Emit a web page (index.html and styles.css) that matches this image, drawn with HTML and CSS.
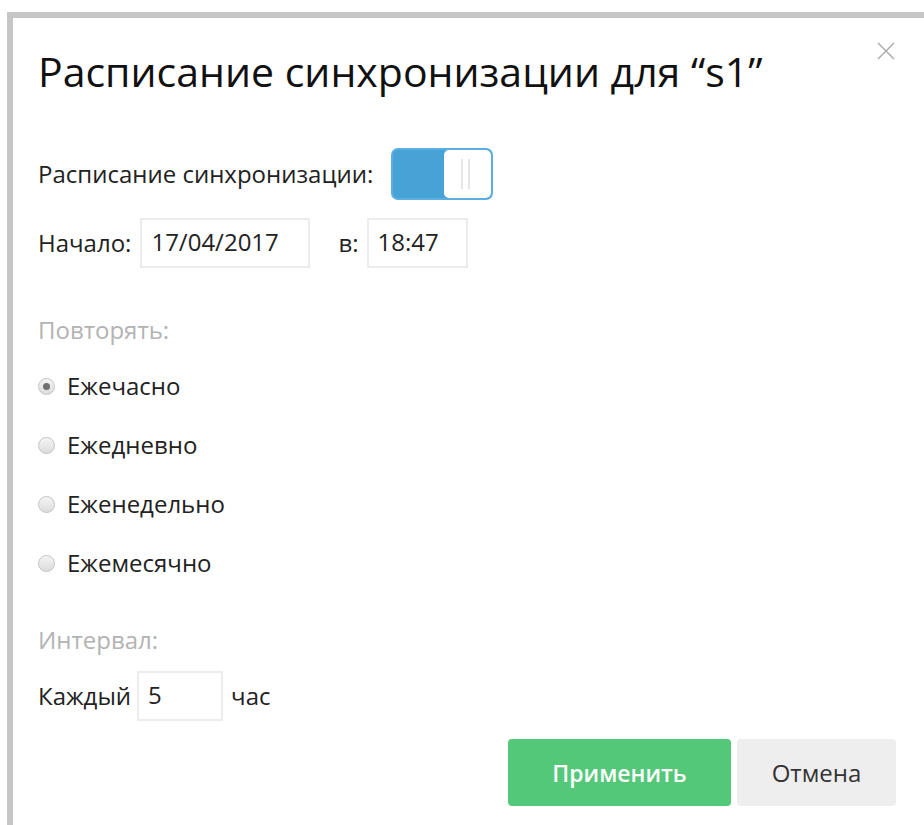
FILE: index.html
```html
<!DOCTYPE html>
<html lang="ru">
<head>
<meta charset="utf-8">
<title>Расписание синхронизации</title>
<link rel="stylesheet" href="styles.css">
</head>
<body>
<div class="frame">
  <div class="dialog">
    <button class="close" type="button" aria-label="Закрыть">
      <svg width="18" height="18" viewBox="0 0 18 18"><path d="M1 1 L17 17 M17 1 L1 17" stroke="#a8a8a8" stroke-width="1.4" fill="none"/></svg>
    </button>
    <h1 class="title">Расписание синхронизации для “s1”</h1>

    <div class="row row-switch">
      <span class="label">Расписание синхронизации:</span>
      <span class="switch">
        <span class="switch-on"></span>
        <span class="switch-handle"><i></i><i></i></span>
      </span>
    </div>

    <div class="row row-start">
      <span class="label">Начало:</span>
      <span class="field field-date">17/04/2017</span>
      <span class="label label-at">в:</span>
      <span class="field field-time">18:47</span>
    </div>

    <div class="section">Повторять:</div>

    <div class="radios">
      <label class="radio"><span class="dot checked"></span>Ежечасно</label>
      <label class="radio"><span class="dot"></span>Ежедневно</label>
      <label class="radio"><span class="dot"></span>Еженедельно</label>
      <label class="radio"><span class="dot"></span>Ежемесячно</label>
    </div>

    <div class="section section-interval">Интервал:</div>

    <div class="row row-interval">
      <span class="label">Каждый</span>
      <span class="field field-num">5</span>
      <span class="label">час</span>
    </div>

    <div class="actions">
      <button class="btn btn-apply" type="button">Применить</button>
      <button class="btn btn-cancel" type="button">Отмена</button>
    </div>
  </div>
</div>
</body>
</html>
```

FILE: styles.css
```css
html, body {
  margin: 0;
  padding: 0;
  background: #fff;
  height: 100%;
  overflow: hidden;
}

body {
  font-family: "Open Sans", "Noto Sans", sans-serif;
  color: #222;
  font-size: 24px;
}

.frame {
  margin: 12px 0 0 7px;
  border-top: 6px solid #c6c6c6;
  border-left: 6px solid #c6c6c6;
  height: 820px;
  box-sizing: border-box;
}

.dialog {
  position: relative;
  padding: 25px 0 0 25px;
  width: 871px;
  box-sizing: border-box;
}

.close {
  position: absolute;
  top: 24px;
  left: 864px;
  width: 18px;
  height: 18px;
  padding: 0;
  border: 0;
  background: none;
}
.close svg { display: block; }

.title {
  margin: 0;
  font-size: 41px;
  font-weight: 400;
  line-height: 56px;
  color: #111;
}

.row {
  display: flex;
  align-items: center;
}

.label {
  line-height: 32px;
}

.row-switch {
  margin-top: 49px;
  height: 52px;
  gap: 18px;
}

.switch {
  display: flex;
  width: 102px;
  height: 52px;
  box-sizing: border-box;
  border: 2px solid #5aaee0;
  border-radius: 7px;
  background: #47a2d6;
  overflow: hidden;
}
.switch-on {
  width: 51px;
}
.switch-handle {
  flex: 1;
  background: #fff;
  border-radius: 5px;
  display: flex;
  justify-content: center;
  align-items: center;
  gap: 5px;
  padding-right: 4px;
}
.switch-handle i {
  display: block;
  width: 2px;
  height: 30px;
  background: #e6e6e6;
}

.row-start {
  margin-top: 18px;
  height: 50px;
}

.field {
  box-sizing: border-box;
  height: 50px;
  border: 2px solid #ececec;
  line-height: 44px;
  padding: 0 9px;
  color: #222;
}
.row-start .label:first-child { margin-right: 9px; }
.field-date { width: 170px; }
.label-at { margin: 0 8px 0 28px; }
.field-time { width: 101px; }

.section {
  margin-top: 46px;
  line-height: 32px;
  color: #b3b3b3;
}

.radios {
  margin-top: 24px;
  display: flex;
  flex-direction: column;
  gap: 27px;
}
.radio {
  display: flex;
  align-items: center;
  height: 32px;
  line-height: 32px;
}
.dot {
  box-sizing: border-box;
  width: 17px;
  height: 17px;
  border-radius: 50%;
  border: 1px solid #c4c4c4;
  background: linear-gradient(#f4f4f4, #dcdcdc);
  margin-right: 12px;
  position: relative;
}
.dot.checked::after {
  content: "";
  position: absolute;
  left: 4px;
  top: 4px;
  width: 7px;
  height: 7px;
  border-radius: 50%;
  background: #707070;
}

.section-interval {
  margin-top: 45px;
}

.row-interval {
  margin-top: 15px;
  height: 50px;
}
.field-num {
  width: 86px;
  margin: 0 8px 0 6px;
}

.actions {
  margin-top: 18px;
  display: flex;
  justify-content: flex-end;
  gap: 6px;
  width: 858px;
}

.btn {
  height: 67px;
  border: 0;
  border-radius: 4px;
  font-family: inherit;
  font-size: 24px;
  padding: 0;
}
.btn-apply {
  width: 223px;
  background: #52c878;
  color: #fff;
  font-weight: 600;
  font-size: 23px;
}
.btn-cancel {
  width: 159px;
  background: #eeeeee;
  color: #333;
}
```
